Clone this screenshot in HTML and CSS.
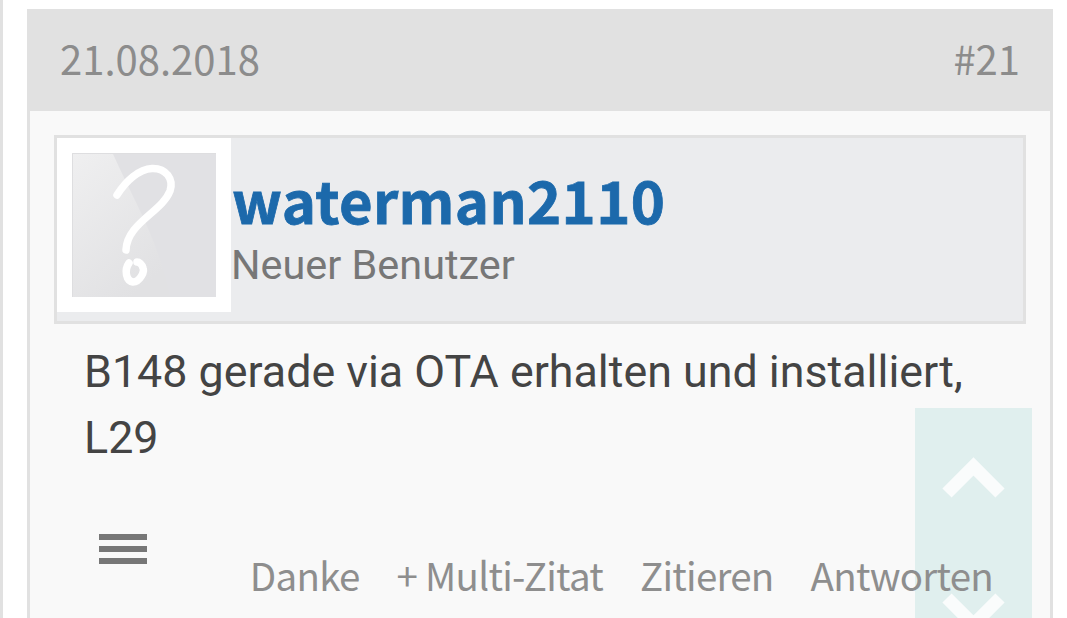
FILE: index.html
```html
<!DOCTYPE html>
<html lang="de">

<head>
    <meta charset="UTF-8">
    <meta name="viewport" content="width=device-width, initial-scale=1.0">
    <title>Beitrag #21</title>
    <link rel="stylesheet" href="styles.css">
</head>

<body>
    <div class="thread">
        <div class="post">
            <div class="post-head">
                <span class="date">21.08.2018</span>
                <span class="number">#21</span>
            </div>
            <div class="post-body">
                <div class="user">
                    <div class="avatar">
                        <svg width="144" height="144" viewBox="0 0 144 144">
                            <defs>
                                <linearGradient id="shine" x1="0" y1="0" x2="0.6" y2="1">
                                    <stop offset="0" stop-color="#efeff0" />
                                    <stop offset="1" stop-color="#e1e1e3" />
                                </linearGradient>
                            </defs>
                            <rect width="144" height="144" fill="#e1e1e4" />
                            <path d="M1 1H41C62 48 88 90 98 144H1Z" fill="url(#shine)" />
                            <path d="M.5 144V.5H144" fill="none" stroke="#dedee0" />
                            <g fill="none" stroke="#fff" stroke-width="7.500" stroke-linecap="round" stroke-linejoin="round">
                                <path d="M45 42C54 28 67 16 80 15.500C94 15 102 26 98 38C90 59 55 70 54 97" />
                                <path d="M57 110C52 117 54 128 61 129C68 129 73 118 71 115C70 111 67 109 65 109" />
                            </g>
                        </svg>
                    </div>
                    <div class="user-info">
                        <a class="name">waterman2110</a>
                        <span class="rank">Neuer Benutzer</span>
                    </div>
                </div>
                <p class="text">B148 gerade via OTA erhalten und installiert, L29</p>
                <div class="post-foot">
                    <div class="menu">
                        <span></span>
                        <span></span>
                        <span></span>
                    </div>
                    <div class="links">
                        <a>Danke</a>
                        <a>+ Multi-Zitat</a>
                        <a>Zitieren</a>
                        <a>Antworten</a>
                    </div>
                </div>
            </div>
        </div>
    </div>
    <div class="scroll-nav">
        <svg width="117" height="210" viewBox="0 0 117 210" fill="none" stroke="#fafcfc" stroke-width="13">
            <path d="M32 85L58.500 58.500L85 85" />
            <path d="M32 190L58.500 216.500L85 190" />
        </svg>
    </div>
</body>

</html>
```
FILE: styles.css
```css
* {
    box-sizing: border-box;
}

body {
    margin: 0;
    height: 618px;
    overflow: hidden;
    background-color: #fff;
    font-family: "Noto Sans CJK SC", sans-serif;
}

.thread {
    height: 618px;
    padding: 9px 14px 0 24px;
    border-left: 3px solid #e1e1e1;
}

.post {
    height: 609px;
    border: 3px solid #e1e1e1;
    border-width: 0 3px;
    background-color: #f9f9f9;
}

.post-head {
    display: flex;
    justify-content: space-between;
    height: 102px;
    padding: 0 30px;
    background-color: #e1e1e1;
    color: #8c8c8c;
    font-size: 40px;
    line-height: 99px;
}

.post-body {
    padding: 24px 24px 0;
}

.user {
    display: flex;
    height: 189px;
    border: 3px solid #e1e1e1;
    background-color: #ebecee;
}

.avatar {
    width: 174px;
    height: 174px;
    padding: 15px;
    background-color: #fff;
}

.avatar svg {
    display: block;
}

.user-info {
    display: flex;
    flex-direction: column;
    padding-top: 31px;
}

.name {
    padding-left: 1px;
    color: #1c69ab;
    font-size: 58px;
    font-weight: 700;
    letter-spacing: 0.35px;
    line-height: 61px;
    -webkit-text-stroke: 0.8px #1c69ab;
}

.rank {
    margin-top: 5px;
    color: #777;
    font-family: Roboto, sans-serif;
    font-size: 41.4px;
    line-height: 60px;
}

.text {
    margin: 15px 30px 0 30px;
    color: #444;
    font-family: Roboto, sans-serif;
    font-size: 44.8px;
    line-height: 66px;
}

.post-foot {
    display: flex;
    justify-content: space-between;
    padding: 63px 33px 0 45px;
}

.menu {
    display: flex;
    flex-direction: column;
    gap: 6px;
    width: 48px;
}

.menu span {
    height: 6px;
    background-color: #777;
}

.links {
    position: relative;
    z-index: 1;
    display: flex;
    gap: 37px;
    height: 60px;
    margin-top: 10px;
    color: #8e8e8e;
    font-size: 38.5px;
    letter-spacing: -0.75px;
    line-height: 61px;
    white-space: nowrap;
}

/* floats over the post */
.scroll-nav {
    position: absolute;
    top: 408px;
    right: 35px;
    width: 117px;
    height: 210px;
    background-color: #e0efee;
}
```
